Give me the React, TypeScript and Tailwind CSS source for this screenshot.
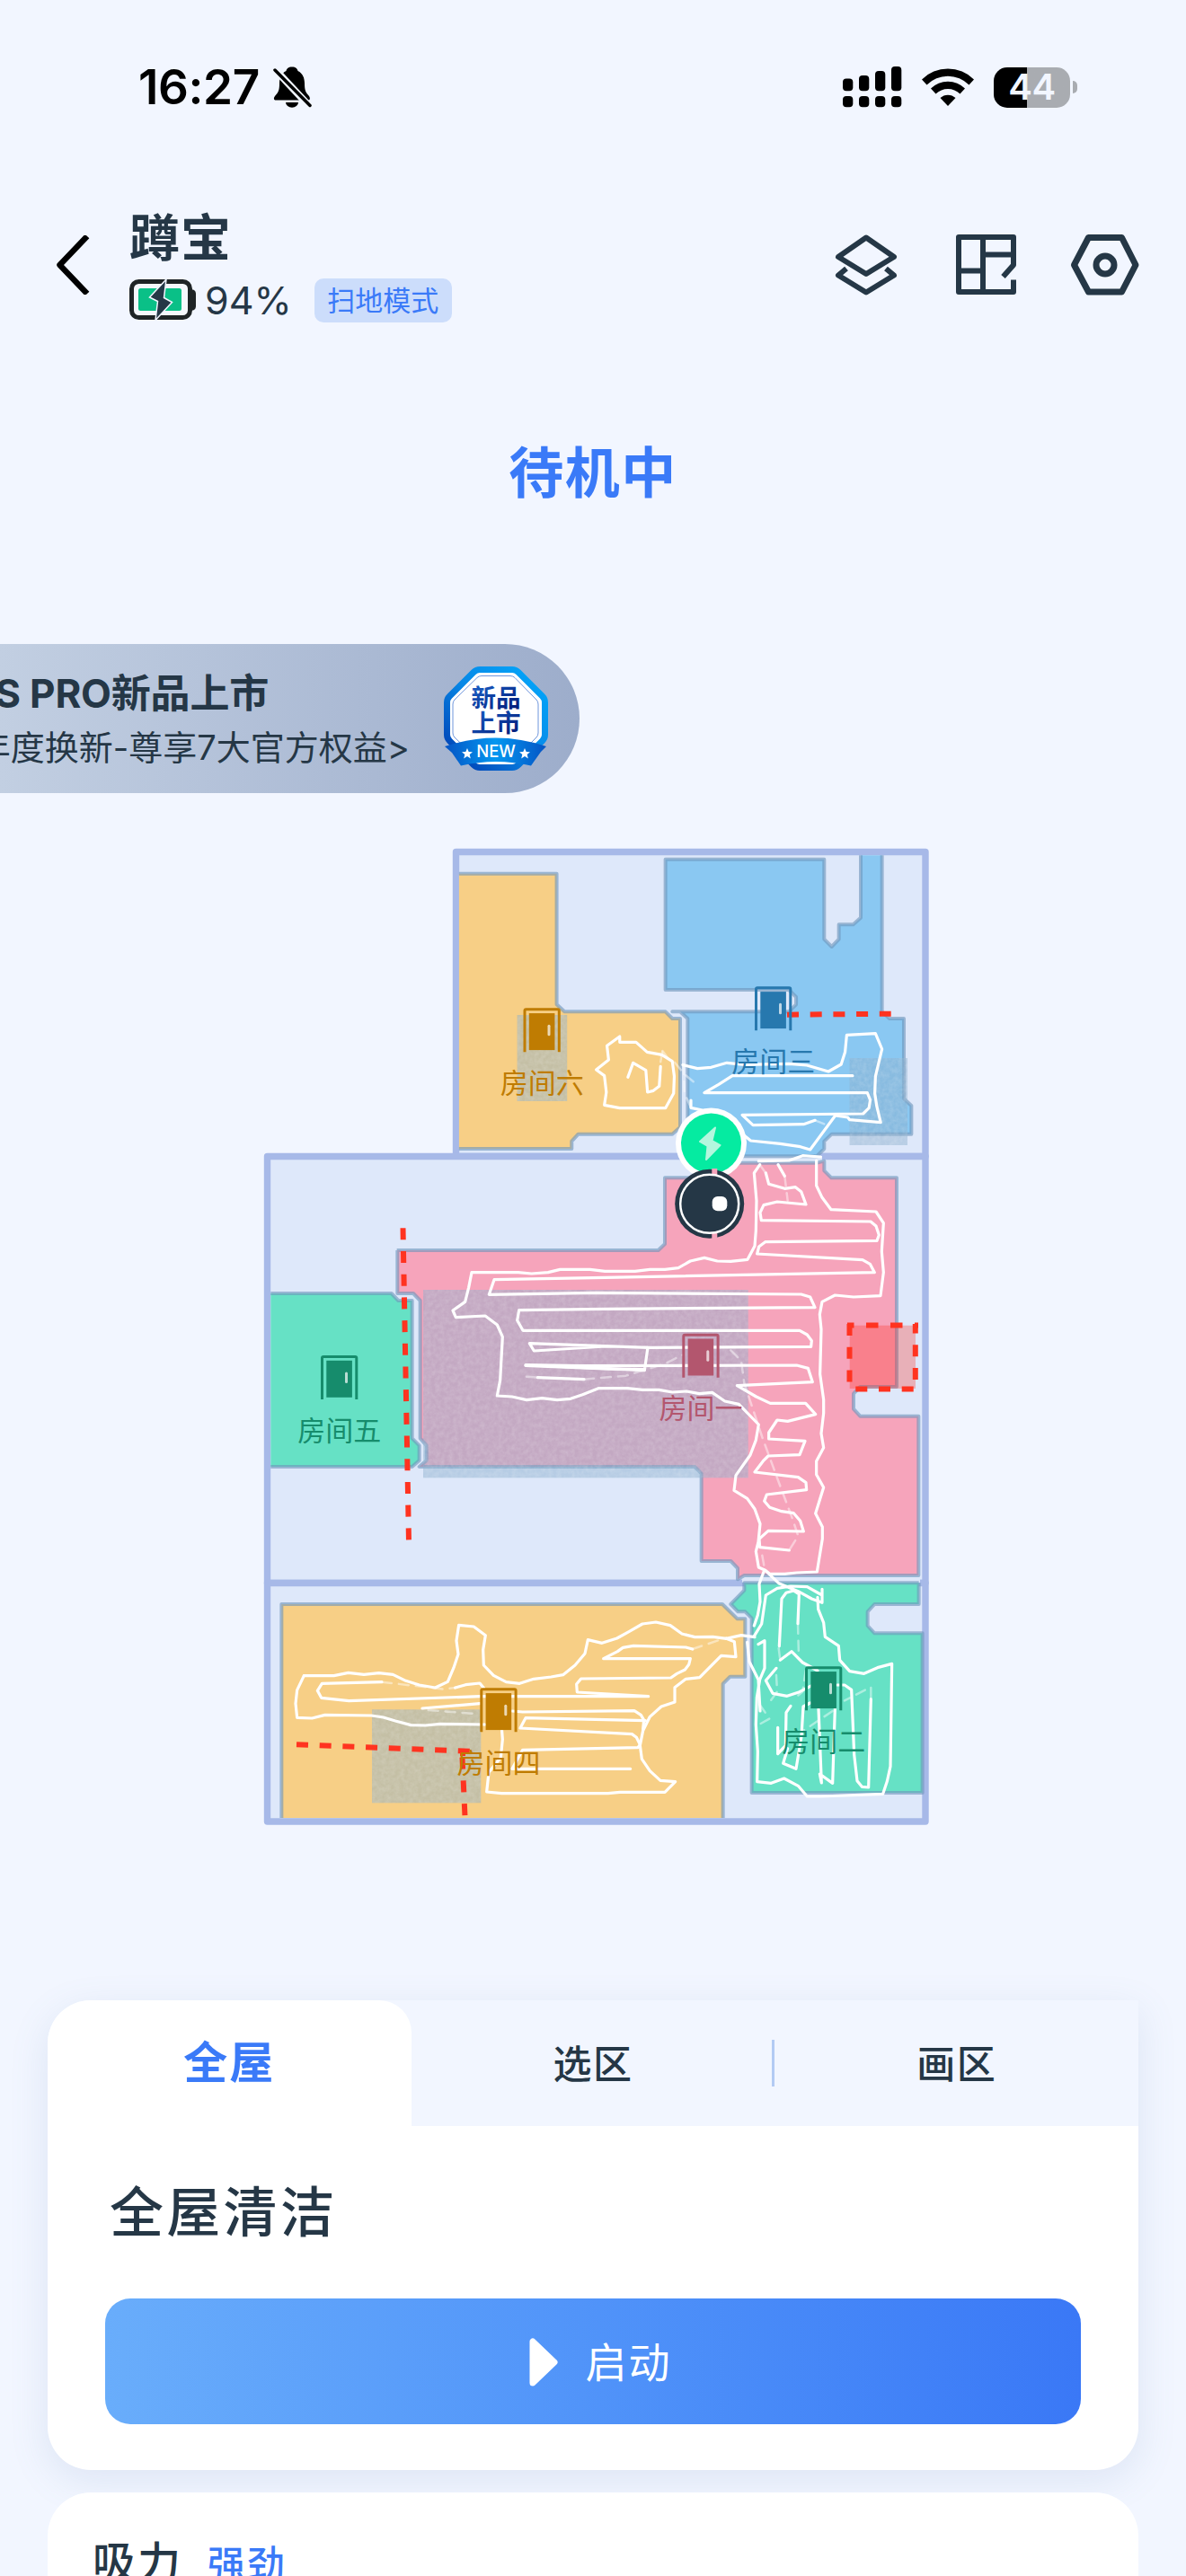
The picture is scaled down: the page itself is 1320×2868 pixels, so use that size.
import { useState } from 'react'

const TABS = ['全屋', '选区', '画区']

const DOORS = [
  { name: '房间六', x: 582.5, y: 1122.3, color: '#bf7c02' },
  { name: '房间三', x: 840, y: 1098.3, color: '#2778ae' },
  { name: '房间五', x: 357, y: 1509, color: '#168c6c' },
  { name: '房间一', x: 759.3, y: 1484.7, color: '#b3566e' },
  { name: '房间四', x: 534.3, y: 1879.3, color: '#bf7c02' },
  { name: '房间二', x: 896, y: 1855.3, color: '#168c6c' },
]

const CARPETS = [
  { x: 575.6, y: 1130, width: 55.6, height: 96 },
  { x: 945.6, y: 1178, width: 64.4, height: 97 },
  { x: 471, y: 1436, width: 361.7, height: 209.3 },
  { x: 414, y: 1903.3, width: 121.3, height: 104 },
]

// Every map section is stored in its own grid and scaled into the map
const NORTH = 'translate(480 930) scale(.36351 .33333)'
const CENTER = 'translate(640 1270) scale(.33333)'
const WEST = 'translate(280 1270) scale(.33333)'
const SOUTH = 'translate(280 1740) scale(.33333)'
const SOUTH_EAST = 'translate(680 1740) scale(.33333)'

const ROOMS = [
  {
    grid: NORTH,
    fill: '#f7cf86',
    points:
      '85,128 384,128 384,565 408,589 717,589 738,612 762,612 762,975 738,998 450,998 430,1022 430,1047 85,1047',
  },
  {
    grid: NORTH,
    fill: '#8ac8f2',
    points:
      '1315,67 1315,275 1292,298 1248,298 1248,347 1226,372 1203,347 1203,80 717,80 717,516 1095,516 1117,540 1117,565 1095,589 738,589 762,589 785,612 785,1072 1180,1072 1203,1047 1203,1022 1226,998 1470,998 1470,903 1447,880 1447,612 1403,612 1380,589 1380,67',
  },
  {
    grid: WEST,
    fill: '#66e1c5',
    points: '64,510 467,510 490,534 536,534 536,994 560,1018 560,1068 536,1089 64,1089',
  },
  {
    grid: CENTER,
    fill: '#f6a4bb',
    points:
      '-593,366 -593,510 -540,510 -517,534 -517,994 -496,1018 -496,1068 -520,1089 400,1089 422,1112 422,1404 520,1404 543,1428 543,1465 565,1452 1147,1452 1147,920 952,920 930,896 930,845 952,822 1074,822 1074,124 856,124 832,100 832,68 808,74 416,74 392,124 300,124 300,345 278,366 -595,366',
  },
  {
    grid: SOUTH,
    fill: '#f7cf86',
    points: '100,852 100,138 1572,138 1622,187 1648,187 1648,380 1598,380 1574,404 1574,852',
  },
  {
    grid: SOUTH_EAST,
    fill: '#66e1c5',
    points:
      '1028,67 1028,138 880,138 857,163 857,210 880,235 1040,235 1040,768 470,768 470,185 448,163 424,163 400,138 445,92 445,67 1028,67',
  },
]

const TRACES = [
  {
    grid: NORTH,
    lines: [
      '577,672 577,691 627,691 661,724 706,733 738,755 744,805 742,862 717,911 577,911 530,901 536,858 530,803 505,783 543,750 538,703 577,672',
      '602,808 618,760 657,785 662,858 680,853 698,838 702,772',
      '770,767 815,779 857,775 905,760 960,766 1095,763 1150,768 1216,789 1255,765 1267,724 1272,667 1360,662 1380,714 1360,805 1358,862 1364,905 1376,959 1281,950 1275,942 1237,936 1160,1050 1130,1040 1068,1030 978,1020 955,1000',
      '1290,803 922,803 880,832 836,860 1335,860 1344,884 1340,911 1322,930 952,934 985,968 1140,965 1175,952',
      '795,885 795,910 830,918',
    ],
    faint: ['708,720 725,745 745,758 775,798 805,825', '702,757 708,720', '772,765 775,860 795,910', '1175,952 1212,968'],
  },
  {
    grid: CENTER,
    lines: [
      '617,80 598,108 606,200 604,300 600,352 576,397 520,403 475,402 432,391 385,402 345,425 300,430 250,430 200,436 100,436 50,430 -50,430 -90,440 -145,444 -190,440 -345,440 -355,490 -367,538 -408,567 -398,590 -300,585 -260,615 -242,655 -250,800 -260,852 -210,855 -162,866 -110,860 -60,866 -15,862 25,848 78,827 175,827 225,832 280,832 325,840 372,837 415,845 458,841 500,870 547,880 613,948 604,1000 585,1050 537,1118 531,1168 575,1195 600,1230 618,1280 612,1340 604,1372 613,1425 635,1435 650,1447 700,1447 740,1443 808,1440 826,1330 826,1290 803,1245 830,1158 806,1115 806,1070 830,1025 822,978 830,910 830,865 818,780 822,630 817,580 825,538 868,516 930,522 1020,518 1030,440 1024,370 1030,275 1005,237 855,230 825,190 806,150 806,66',
      '637,108 647,145 700,160 736,155 755,170 771,213 675,204 630,215 618,240 622,266 987,270 1005,285 1015,315 1008,334 635,338 614,354 608,378 960,398 985,412 1000,440 100,457 -270,464 -287,514 70,508 755,513 785,522 801,557 100,562 -187,566 -193,600 -174,634 750,634 775,648 790,668 788,688 245,691 -152,677 -137,702 100,687 243,690 232,767 -165,749 20,752 740,750 778,760 793,806 541,818 605,855 652,877 770,877 803,914 710,937 675,933 647,975 647,996 768,1003 750,1049 645,1053 628,1070 600,1107 745,1124 771,1142 773,1166 640,1182 632,1204 650,1225 690,1238 730,1244 752,1270 763,1305 645,1303 615,1330 617,1358 715,1368',
      '-165,751 100,762 232,764',
      '678,80 700,118',
      '-125,791 30,797',
      '613,68 715,66 760,50 820,54',
    ],
    faint: [
      '700,118 710,200',
      '620,85 637,108',
      '-162,788 -125,791',
      '30,797 170,785 300,745 360,715',
      '520,700 555,735 565,810 625,990 680,1140 725,1260 745,1320 715,1368',
      '625,1385 632,1425',
    ],
  },
  {
    grid: SOUTH,
    lines: [
      '175,377 275,377 323,367 375,373 425,368 472,373 515,394 560,408 613,417 655,397 675,350 690,305 684,260 692,208 742,213 781,242 773,290 775,342 808,376 850,398 895,403 942,388 1000,381 1040,374 1080,342 1113,303 1123,257 1170,268 1220,252 1260,230 1305,204 1350,198 1398,209 1437,237 1480,248 1540,247 1585,253 1612,263 1617,314 1568,310 1496,383 1450,388 1413,416 1413,465 1368,480 1330,514 1307,560 1297,610 1303,655 1330,695 1365,727 1415,731 1380,766 1230,766 1190,770 835,770 785,765 792,700 832,650 838,590 835,550',
      '780,540 630,538 580,543 532,542 480,528 440,516 400,510 245,508 202,519 152,517 147,470 152,425 175,377',
      '435,398 235,403 220,427 233,451 325,461 762,446 1325,446 1087,432 1085,405 1100,387 1400,384 1420,370 1447,357 1460,340 1465,320 1175,320 1222,296 1240,283 1275,277 1450,282 1472,288',
      '680,417 715,407 762,402 775,418',
      '570,486 762,470',
      '870,495 905,498 1278,494 1300,508 1310,525 1307,555',
      '1315,527 915,518 897,552 1270,572 1285,583 1297,607 1290,617 905,625 870,688 1265,688',
      '1585,253 1635,242 1680,248',
    ],
    faint: ['435,398 640,422 680,417', '590,492 760,505', '1472,288 1585,250'],
  },
  {
    grid: SOUTH_EAST,
    lines: [
      '510,30 495,70 498,130 490,175 478,210',
      '478,245 503,204 517,108 555,85 600,78 655,80 705,108 705,88 705,133 670,120 625,95 560,68 515,25',
      '562,278 570,120 585,100 610,93 628,105 624,203',
      '690,115 692,155 710,200 715,247 760,277 764,325 797,362 845,370 890,350 938,337 933,680 922,730 908,772 700,780 655,780 625,745 578,720 535,736 488,731 490,630 484,540 487,450 497,390 513,352 513,260 492,272',
      '455,265 462,330 492,390 498,495',
      '552,352 517,393 540,436 588,445 625,433 670,410',
      '565,325 603,296 640,333 690,360',
      '600,478 585,500 583,610 557,638 557,550',
      '665,468 642,480 636,580 618,688 575,670 590,620',
      '693,487 703,735 697,705 740,736 748,487',
      '755,408 780,408 803,424 812,640 822,728 838,748 860,750 868,455',
    ],
    faint: [
      '624,203 627,310',
      '868,450 868,415 780,460',
      '740,495 640,562',
      '552,375 555,430 530,465',
      '500,478 515,500',
      '500,537 530,520',
      '560,285 565,325',
      '650,360 640,430 610,455',
    ],
  },
]

function StatusBar() {
  return (
    <div className="flex h-[194px] shrink-0 items-center justify-between pl-[154px] pr-[121px] text-black">
      <div className="flex items-center gap-[15px]">
        <span className="text-[53px] font-semibold leading-none tracking-[-0.4px]">16:27</span>
        <svg width="43" height="46" viewBox="0 0 43 46">
          <path d="M21 .5c-4 0-6 2-6.5 4.500C9 7.500 7 13 7 19c0 8-1.500 10-5 14-2 2.500-1 4.500 1 4.500h36c2 0 2.500-2 1-4.500-3.500-4-5-6-5-14 0-6-2-11.500-7.500-14C27 2.500 25 .5 21 .5z" />
          <path d="M14 40h14a7 5.800 0 0 1-14 0z" />
          <path d="M0 1 42 46" stroke="#f2f6ff" strokeWidth="8" />
          <path d="M2 4 41 43.500" stroke="#000" strokeWidth="3.500" strokeLinecap="round" />
        </svg>
      </div>
      <div className="flex items-center">
        <svg width="66" height="46" viewBox="0 0 66 46">
          {[13.5, 10, 5, 0].map((top, i) => (
            <g key={top}>
              <rect x={i * 18} y={top} width="11.300" height={27.3 - top} rx="4" />
              <rect x={i * 18} y="33" width="11.300" height="12.300" rx="4" />
            </g>
          ))}
        </svg>
        <svg className="ml-[22px]" width="58" height="44" viewBox="0 0 58 44">
          <path d="M0 13.500a41 41 0 0 1 58 0l-5.500 6a33 33 0 0 0-47 0z" />
          <path d="M10 23.500a27 27 0 0 1 38 0l-5.500 6a19.500 19.500 0 0 0-27 0z" />
          <path d="M20.500 34a12.500 12.500 0 0 1 17 0L29 43z" />
        </svg>
        <div className="ml-[22px] flex items-center gap-[3px]">
          <div className="flex h-[45px] w-[85px] items-center justify-center rounded-[15px] bg-linear-to-r from-black from-[43.5%] to-[#a9acb1] to-[43.5%] text-[40px] font-semibold leading-none tracking-[-0.5px] text-[#f2f6ff]">
            44
          </div>
          <div className="h-[14px] w-[5px] rounded-r-full bg-[#a9acb1]" />
        </div>
      </div>
    </div>
  )
}

function BatteryIcon() {
  return (
    <svg width="75" height="46" viewBox="0 0 75 46">
      <rect x="2.500" y="2.500" width="65" height="40" rx="8" fill="#f5f7fc" stroke="#1f2426" strokeWidth="5" />
      <path d="M70 11.500c3 0 4 2.500 4 5v13c0 2.500-1 5-4 5z" fill="#1f2426" />
      <rect x="10" y="10" width="48" height="25" rx="2.500" fill="#0ac087" />
      <path
        d="M41 0 22.500 20l9 4.500L29 45.500 47.500 25.500 38.500 20.500z"
        fill="#253746"
        stroke="#f2f6ff"
        strokeWidth="1.500"
      />
    </svg>
  )
}

function Header() {
  return (
    <div className="flex h-[202px] shrink-0 items-center pl-[62px] pr-[52px]">
      <svg width="38" height="66" viewBox="0 0 38 66" fill="none" stroke="#000" strokeWidth="6.500">
        <path d="M35 1 4.500 33 35 65" strokeLinejoin="round" />
      </svg>
      <div className="ml-[44px] flex flex-col">
        <h1 className="text-[56px] font-bold leading-[74px] tracking-[1px]">蹲宝</h1>
        <div className="mt-[4px] flex h-[56px] items-center">
          <BatteryIcon />
          <span className="ml-[9px] text-[43px] leading-none">94%</span>
          <span className="ml-[25px] flex h-[49px] w-[153px] items-center justify-center rounded-[10px] bg-[#ccddfb] text-[31px] leading-none text-[#3a7af8]">
            扫地模式
          </span>
        </div>
      </div>
      <div className="ml-auto flex gap-[56px] text-[#253746]">
        <svg width="77" height="72" viewBox="0 0 77 72" fill="none" stroke="currentColor" strokeWidth="6">
          <path d="M39 5.500 70 27 39 46 8 27z" strokeLinejoin="round" />
          <path d="M17 40 8 47.500 39 66.500 70 47.500 61 40" strokeLinejoin="round" />
        </svg>
        <svg width="77" height="72" viewBox="0 0 77 72" fill="none" stroke="currentColor" strokeWidth="6">
          <path d="M58.500 49 70 36V5H9v61h61V52.500" strokeLinejoin="round" />
          <path d="M36 5v61M36 24.500h34M9 42.500h27" />
        </svg>
        <svg width="77" height="72" viewBox="0 0 77 72" fill="none" stroke="currentColor" strokeWidth="7">
          <path d="M20.500 5.500h37L73 36 57.500 66h-37L4.500 36z" strokeLinejoin="round" />
          <circle cx="39" cy="36" r="10" />
        </svg>
      </div>
    </div>
  )
}

function NewBadge() {
  return (
    <svg width="116" height="116" viewBox="0 0 116 116">
      <defs>
        <linearGradient id="badge" x1="0" y1="1" x2="1" y2="0">
          <stop offset="0" stopColor="#0037ad" />
          <stop offset=".5" stopColor="#0787e6" />
          <stop offset="1" stopColor="#02a9fc" />
        </linearGradient>
        <linearGradient id="badgeText" x1="0" y1="0" x2="1" y2="1">
          <stop offset="0" stopColor="#1a63cb" />
          <stop offset="1" stopColor="#001470" />
        </linearGradient>
        <linearGradient id="ribbon" x1="0" y1="0" x2="1" y2="0">
          <stop offset="0" stopColor="#0554c4" />
          <stop offset=".5" stopColor="#0497f0" />
          <stop offset="1" stopColor="#0554c4" />
        </linearGradient>
      </defs>
      <path
        d="M40 3.500h36q4 0 7 3L109.500 33q3 3 3 7v36q0 4-3 7L83 109.500q-3 3-7 3H40q-4 0-7-3L6.500 83q-3-3-3-7V40q0-4 3-7L33 6.500q3-3 7-3z"
        fill="#fff"
        stroke="url(#badge)"
        strokeWidth="7"
      />
      <path
        d="M42 10.500h32q3 0 5 2L103 37q2 2 2 5v32q0 3-2 5L79 103q-2 2-5 2H42q-3 0-5-2L12 79q-2-2-2-5V42q0-3 2-5L37 12.500q2-2 5-2z"
        fill="none"
        stroke="#6f96dc"
        strokeWidth="1"
      />
      <text x="58" y="45" textAnchor="middle" fontSize="27.500" fontWeight="700" fill="url(#badgeText)">
        新品
      </text>
      <text x="58" y="73" textAnchor="middle" fontSize="27.500" fontWeight="700" fill="url(#badgeText)">
        上市
      </text>
      <path d="M1 89q57-19 113 0l-6 6-11 15.500q-39-9-78 0L9 96z" fill="url(#ribbon)" />
      <text x="58" y="100.500" textAnchor="middle" fontSize="18.500" fontWeight="500" fill="#fff">
        NEW
      </text>
      {[26, 90].map((x) => (
        <path
          key={x}
          transform={`translate(${x} 97)`}
          d="M0-6 1.700-1.900 6-1.700 2.700 1 3.800 5.500 0 3-3.800 5.500-2.700 1-6-1.700-1.700-1.900z"
          fill="#fff"
        />
      ))}
    </svg>
  )
}

function PromoBanner() {
  return (
    <div className="flex h-[166px] w-[645px] items-center justify-end overflow-hidden rounded-r-full bg-linear-to-r from-[#c2cfe2] to-[#9dadcb] pr-[35px]">
      <div className="w-[456px] shrink-0 pt-[4px]">
        <div className="flex h-[60px] w-[299px] items-center justify-end whitespace-nowrap text-[44px] font-bold leading-none tracking-[-0.2px]">
          S PRO新品上市
        </div>
        <div className="flex h-[60px] items-center justify-end whitespace-nowrap text-[38px] leading-none">
          年度换新-尊享7大官方权益&gt;
        </div>
      </div>
      <div className="ml-[38px] shrink-0">
        <NewBadge />
      </div>
    </div>
  )
}

function Door({ name, x, y, color }: { name: string; x: number; y: number; color: string }) {
  return (
    <g transform={`translate(${x} ${y})`}>
      <path d="M1.500 49V3q0-1.500 1.500-1.500h35.300q1.500 0 1.500 1.500v46" fill="none" stroke={color} strokeWidth="3" />
      <rect x="6.300" y="5.800" width="28.600" height="41" fill={color} />
      <rect x="27" y="18.500" width="3" height="12.500" rx="1.500" fill="#fff" fillOpacity=".7" />
      <text x="20.700" y="94.500" textAnchor="middle" fontSize="31" fill={color}>
        {name}
      </text>
    </g>
  )
}

function FloorMap() {
  return (
    <svg className="ml-[280px]" width="780" height="1120" viewBox="280 930 780 1120">
      <defs>
        <filter id="carpet" x="0" y="0" width="1" height="1">
          <feTurbulence type="fractalNoise" baseFrequency=".2" numOctaves="3" seed="4" />
          <feColorMatrix values="0 0 0 0 1  0 0 0 0 1  0 0 0 0 1  .28 0 0 0 -.08" />
          <feComposite in2="SourceGraphic" operator="in" />
        </filter>
      </defs>

      <g fill="#dee8fa" stroke="#a7b9e8" strokeWidth="7.400" strokeLinejoin="round">
        <path d="M507.500 948.500H1030V1287.500H507.500z" />
        <path d="M297.500 1287.500H1030V1762.500H297.500z" />
        <path d="M297.500 1762.500H1030V2028H297.500z" />
      </g>
      <path d="M822 1290.500H915M826 1758.500H1024" stroke="#dee8fa" strokeWidth="7" />

      {ROOMS.map((room) => (
        <g key={room.points} transform={room.grid}>
          <polyline
            points={room.points}
            fill={room.fill}
            stroke="#6f96bb"
            strokeOpacity=".62"
            strokeWidth="4"
            strokeLinejoin="round"
            vectorEffect="non-scaling-stroke"
          />
        </g>
      ))}

      {CARPETS.map((carpet) => (
        <g key={carpet.x}>
          <rect {...carpet} fill="#87adca" fillOpacity=".46" />
          <rect {...carpet} filter="url(#carpet)" />
        </g>
      ))}

      {TRACES.map((trace) => (
        <g key={trace.grid} transform={trace.grid} fill="none" stroke="#fff" strokeLinejoin="round" strokeLinecap="round">
          {trace.lines.map((points) => (
            <polyline key={points} points={points} strokeWidth="3.200" vectorEffect="non-scaling-stroke" />
          ))}
          {trace.faint.map((points) => (
            <polyline
              key={points}
              points={points}
              strokeWidth="2.500"
              strokeOpacity=".45"
              strokeDasharray="11 8"
              vectorEffect="non-scaling-stroke"
            />
          ))}
        </g>
      ))}

      {/* virtual walls and no-go zone */}
      <rect x="945.700" y="1475.700" width="73.300" height="70.300" fill="#ff3021" fillOpacity=".3" />
      <g fill="none" stroke="#ff3320" strokeWidth="6" strokeDasharray="13 12.700">
        <path d="M876 1129.700 991.700 1128.700" />
        <path d="M448.500 1367.300 455 1716" />
        <path d="M330 1942.300 523.500 1949.700" />
        <path d="M515 1949V1955M514.500 1956.700 517.500 2022.500" />
        <path d="M943 1475.500H1022" strokeDasharray="13.500 13.500" strokeDashoffset="6" />
        <path d="M945.500 1474V1548" />
        <path d="M1018.800 1474V1548" strokeDashoffset="2.500" />
        <path d="M952.300 1546.600H1019" />
      </g>

      {DOORS.map((door) => (
        <Door key={door.name} {...door} />
      ))}

      {/* dock */}
      <circle cx="791.500" cy="1273" r="39.500" fill="#fff" />
      <circle cx="791.500" cy="1273" r="33.500" fill="#05eba1" />
      <path
        d="M796 1255.500 779 1271 787.500 1276 786 1291 801.500 1275 792.500 1270z"
        fill="#b4f7de"
        stroke="#b4f7de"
        strokeWidth="2"
        strokeLinejoin="round"
      />

      {/* robot */}
      <circle cx="789.700" cy="1340.300" r="38.500" fill="#253746" />
      <path d="M795.300 1301v7M795.300 1372.500v8" stroke="#f6a4bb" strokeWidth="6" />
      <circle cx="789.700" cy="1340.300" r="32.500" fill="#253746" stroke="#fff" strokeWidth="2.500" />
      <rect x="792.700" y="1332" width="16.600" height="16.300" rx="6" fill="#fff" />
    </svg>
  )
}

function ModeCard() {
  const [active, setActive] = useState('全屋')

  return (
    <div className="mx-[53px] h-[523px] overflow-hidden rounded-[48px] rounded-tr-none bg-white shadow-[0_12px_44px_rgba(90,125,180,0.14)]">
      <div className="flex h-[140px] bg-[#f2f6ff]">
        {TABS.map((tab, i) => (
          <button
            key={tab}
            onClick={() => setActive(tab)}
            className={
              tab === active
                ? 'flex flex-1 items-center justify-center rounded-tr-[36px] bg-white text-[49px] font-bold tracking-[2px] text-[#3a7af8]'
                : 'relative flex flex-1 items-center justify-center pt-[2px] text-[43px] font-medium tracking-[1.500px]'
            }
          >
            {tab}
            {i === 2 && <span className="absolute -left-[3px] top-[44px] h-[52px] w-[3px] bg-[#b3cbf4]" />}
          </button>
        ))}
      </div>
      <h2 className="ml-[69px] mt-[51px] text-[60px] font-medium leading-[90px] tracking-[3.300px]">全屋清洁</h2>
      <button className="mx-[64px] mt-[51px] flex h-[140px] w-[1086px] items-center justify-center gap-[31px] rounded-[28px] bg-linear-to-r from-[#69adfb] to-[#3a78f6] pl-[16px] pt-[2px] text-[46px] tracking-[2px] text-white">
        <svg width="32" height="56" viewBox="0 0 32 56">
          <path d="M4 5v46L28 28z" fill="#fff" stroke="#fff" strokeWidth="7" strokeLinejoin="round" />
        </svg>
        启动
      </button>
    </div>
  )
}

export default function App() {
  return (
    <div className="flex h-[2868px] w-[1320px] flex-col overflow-hidden bg-[#f2f6ff] font-[Inter,'Noto_Sans_CJK_SC',sans-serif] text-[#253746]">
      <StatusBar />
      <Header />
      <div className="mt-[86px] text-center text-[61px] font-bold leading-[90px] tracking-[1.500px] text-[#3a7af8]">
        待机中
      </div>
      <div className="mt-[145px]">
        <PromoBanner />
      </div>
      <div className="mt-[47px] h-[1120px] shrink-0">
        <FloorMap />
      </div>
      <div className="mt-[177px]">
        <ModeCard />
      </div>
      <div className="mx-[53px] mt-[25px] h-[93px] shrink-0 overflow-hidden rounded-t-[48px] bg-white pl-[50px] pt-[40px]">
        <div className="flex items-baseline gap-[28px]">
          <span className="text-[48px] font-medium leading-[76px] tracking-[2px]">吸力</span>
          <span className="text-[42px] font-medium tracking-[2px] text-[#3a7af8]">强劲</span>
        </div>
      </div>
    </div>
  )
}
